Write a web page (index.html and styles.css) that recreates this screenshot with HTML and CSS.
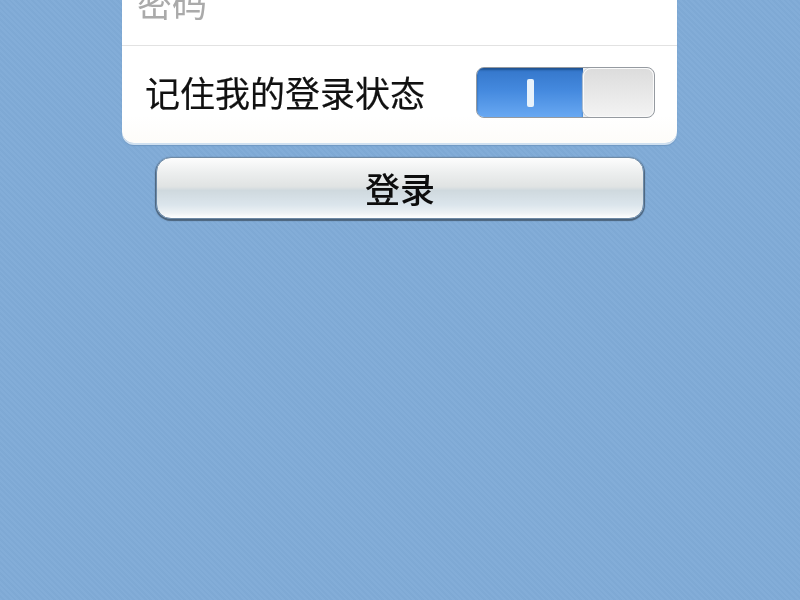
FILE: index.html
```html
<!DOCTYPE html>
<html lang="zh">
<head>
<meta charset="utf-8">
<title>登录</title>
<link rel="stylesheet" href="styles.css">
</head>
<body>
<main class="page">
  <form class="card">
    <div class="row row-password"><span class="placeholder">密码</span></div>
    <div class="row row-remember">
      <span class="label">记住我的登录状态</span>
      <div class="switch">
        <div class="switch-on"><span class="switch-bar"></span></div>
        <div class="switch-knob"></div>
      </div>
    </div>
  </form>
  <button class="login" type="button">登录</button>
</main>
</body>
</html>
```
FILE: styles.css
```css
* { box-sizing: border-box; }
html, body { margin: 0; height: 100%; overflow: hidden; }
body {
  font-family: "Noto Sans CJK SC", "Liberation Sans", sans-serif;
  background-color: #80abd7;
  background-image: repeating-linear-gradient(45deg, rgba(255,255,255,.025) 0 2px, rgba(0,0,0,.012) 2px 4px);
}
.page { display: flex; flex-direction: column; align-items: center; filter: blur(.55px); }
.card {
  width: 555px;
  margin-top: -39px;
  margin-left: -1px;
  background: linear-gradient(#fff 85%, #fdfcf9);
  border-radius: 0 0 12px 12px;
  box-shadow: 0 2px 0 #cfe0f0, 0 3px 1px #6f98c4;
}
.row { display: flex; align-items: center; }
.row-password { height: 85px; padding: 0 0 4px 15px; border-bottom: 1px solid #e2e2e2; }
.row-remember { height: 97px; padding: 0 22px 4px 23px; justify-content: space-between; }
.placeholder { font-size: 35px; color: #aaa; line-height: 1; }
.label { font-size: 35px; color: #111; line-height: 1; margin-bottom: 2px; -webkit-text-stroke: .2px #111; }
.switch {
  display: flex;
  width: 179px;
  height: 51px;
  border: 1px solid #959aa0;
  border-radius: 8px;
  overflow: hidden;
  background: #eee;
}
.switch-on {
  width: 106px;
  display: flex;
  align-items: center;
  justify-content: center;
  background: linear-gradient(#3476ca 0, #4489de 45%, #68a8f2 100%);
  box-shadow: inset 0 2px 2px #1f5392;
}
.switch-bar {
  width: 7px;
  height: 28px;
  background: #e8f2fb;
  border-radius: 2px;
}
.switch-knob {
  flex: 1;
  border-radius: 8px;
  background: linear-gradient(#dcdcdc, #f3f3f3);
  border: 1px solid #fafafa;
  box-shadow: -1px 0 1px #b9c4d0;
}
.login {
  width: 488px;
  height: 62px;
  margin-top: 14px;
  padding: 0 0 2px;
  border: 1px solid #6f8aa5;
  border-radius: 15px;
  font: 500 35px/1 "Noto Sans CJK SC", "Liberation Sans", sans-serif;
  color: #0d0d0d;
  background: linear-gradient(#fdfdfd 0, #eceeee 25%, #e0e3e3 48%, #cfd9de 54%, #dbe5ec 78%, #eef2f5 92%, #fff 100%);
  box-shadow: 0 1px 1px 1px #4a627b;
}
```
